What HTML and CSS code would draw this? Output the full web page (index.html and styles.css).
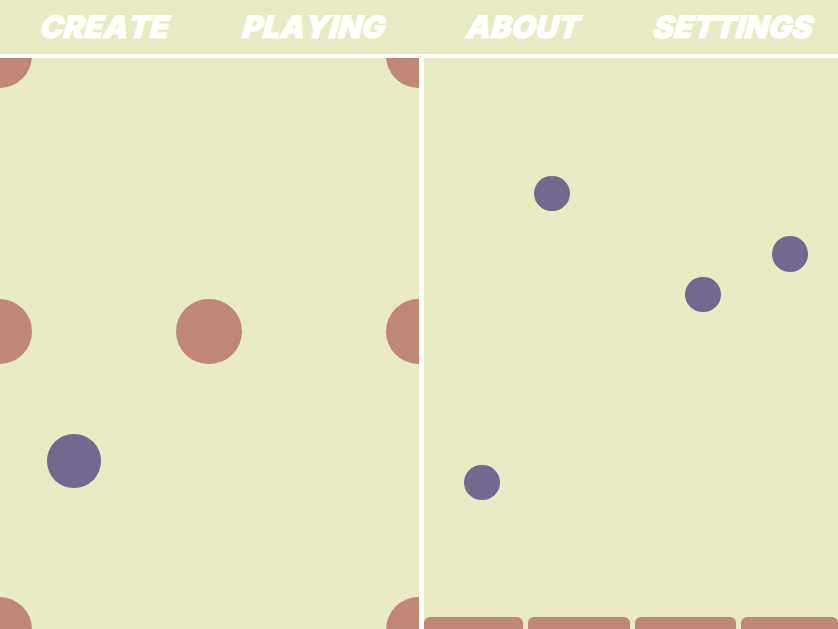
FILE: index.html
```html
<!DOCTYPE html>
<html lang="en">
<head>
<meta charset="utf-8">
<title>Game</title>
<link rel="stylesheet" href="styles.css">
</head>
<body>
<div class="app">
  <nav class="nav">
    <div class="nav-cell"><a class="nav-item">CREATE</a></div>
    <div class="nav-cell"><a class="nav-item">PLAYING</a></div>
    <div class="nav-cell"><a class="nav-item">ABOUT</a></div>
    <div class="nav-cell"><a class="nav-item">SETTINGS</a></div>
  </nav>
  <main class="panels">
    <section class="panel panel-left">
      <span class="dot big tl"></span>
      <span class="dot big tr"></span>
      <span class="dot big ml"></span>
      <span class="dot big mc"></span>
      <span class="dot big mr"></span>
      <span class="dot big bl"></span>
      <span class="dot big br"></span>
      <span class="dot player"></span>
    </section>
    <section class="panel panel-right">
      <span class="dot ball b1"></span>
      <span class="dot ball b2"></span>
      <span class="dot ball b3"></span>
      <span class="dot ball b4"></span>
      <div class="pads">
        <span class="pad"></span>
        <span class="pad"></span>
        <span class="pad"></span>
        <span class="pad"></span>
      </div>
    </section>
  </main>
</div>
</body>
</html>
```

FILE: styles.css
```css
* { box-sizing: border-box; }
html, body { margin: 0; padding: 0; height: 100%; }
body { background: #e9ebc5; overflow: hidden; }
.app { width: 838px; height: 629px; display: flex; flex-direction: column; }
.nav {
  height: 58px;
  display: grid;
  grid-template-columns: repeat(4, 1fr);
  align-items: center;
  border-bottom: 4px solid #fffef6;
  background: #e8eac4;
}
.nav-cell { display: flex; justify-content: center; }
.nav-item {
  display: block;
  font-family: "Inter", "Liberation Sans", sans-serif;
  font-weight: 900;
  font-style: italic;
  font-size: 31px;
  line-height: 54px;
  font-kerning: none;
  letter-spacing: 0;
  color: #fffffb;
  -webkit-text-stroke: 1px #fffffb;
  transform: skewX(-6deg);
}
.panels { flex: 1; display: grid; grid-template-columns: 419px 5px 1fr; }
.panel { position: relative; overflow: hidden; }
.panel-left { grid-column: 1; }
.panel-right { grid-column: 3; }
.panels::before { content: ""; grid-column: 2; grid-row: 1; background: #fffef6; }
.dot { position: absolute; border-radius: 50%; }
.big { width: 65.5px; height: 65.5px; background: #c08678; }
.tl { left: -33.5px; top: -35.5px; }
.tr { left: 386px; top: -35.5px; }
.ml { left: -33.5px; top: 240.5px; }
.mc { left: 176px; top: 240.5px; }
.mr { left: 386px; top: 240.5px; }
.bl { left: -33.5px; top: 539px; }
.br { left: 386px; top: 539px; }
.player { width: 53.5px; height: 53.5px; left: 47px; top: 376px; background: #74688f; }
.ball { width: 35.5px; height: 35.5px; background: #74688f; }
.b1 { left: 110px; top: 117.5px; }
.b2 { left: 261px; top: 218.5px; }
.b3 { left: 348px; top: 178px; }
.b4 { left: 40px; top: 406.5px; }
.pads {
  position: absolute; left: 0; right: 0; bottom: 0;
  height: 12px;
  display: grid;
  grid-template-columns: 99px 102px 101px 1fr;
  column-gap: 5px;
}
.pad { background: #c08678; border-radius: 6px 6px 0 0; }
```
